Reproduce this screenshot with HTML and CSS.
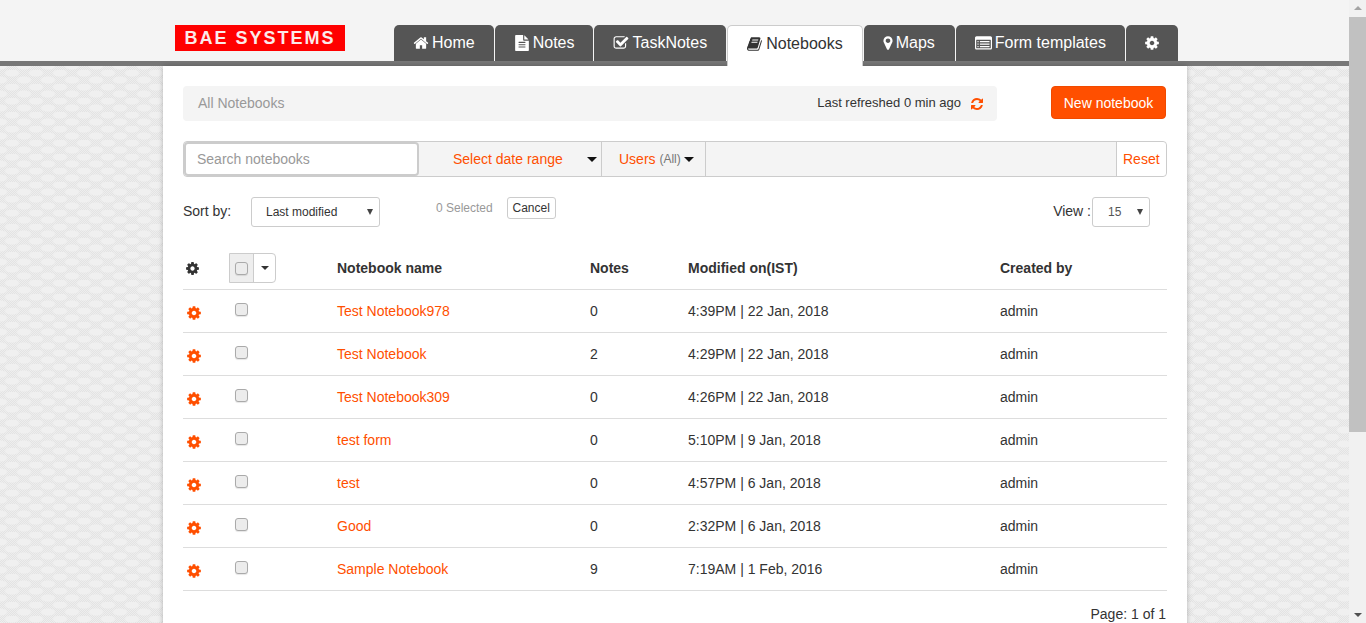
FILE: index.html
```html
<!DOCTYPE html>
<html lang="en">

<head>
    <meta charset="UTF-8">
    <meta name="viewport" content="width=device-width, initial-scale=1.0">
    <title>Notebooks</title>

    <link rel="stylesheet" href="styles.css">

</head>

<body>
    <!-- Icon set, reused with <use> -->
    <svg class="icon-defs" xmlns="http://www.w3.org/2000/svg">
        <symbol id="i-home" viewBox="0 0 1792 1792"><path d="M1472 992v480q0 26-19 45t-45 19h-384v-384h-256v384h-384q-26 0-45-19t-19-45v-480q0-1 .5-3t.5-3l575-474 575 474q1 2 1 6zm223-69l-62 74q-8 9-21 11h-3q-13 0-21-7l-692-577-692 577q-12 8-24 7-13-2-21-11l-62-74q-8-10-7-23.500t11-21.500l719-599q32-26 76-26t76 26l244 204v-195q0-14 9-23t23-9h192q14 0 23 9t9 23v408l219 182q10 8 11 21.500t-7 23.500z"/></symbol>
        <symbol id="i-file" viewBox="0 0 1792 1792"><path d="M1596 476q14 14 28 36h-472v-472q22 14 36 28zm-476 164h544v1056q0 40-28 68t-68 28h-1344q-40 0-68-28t-28-68v-1600q0-40 28-68t68-28h800v544q0 40 28 68t68 28zm160 736v-64q0-14-9-23t-23-9h-704q-14 0-23 9t-9 23v64q0 14 9 23t23 9h704q14 0 23-9t9-23zm0-256v-64q0-14-9-23t-23-9h-704q-14 0-23 9t-9 23v64q0 14 9 23t23 9h704q14 0 23-9t9-23zm0-256v-64q0-14-9-23t-23-9h-704q-14 0-23 9t-9 23v64q0 14 9 23t23 9h704q14 0 23-9t9-23z"/></symbol>
        <symbol id="i-check" viewBox="0 0 1792 1792"><path d="M1472 930v318q0 119-84.500 203.500t-203.500 84.500h-832q-119 0-203.500-84.500t-84.500-203.500v-832q0-119 84.500-203.500t203.500-84.500h832q63 0 117 25 15 7 18 23 3 17-9 29l-49 49q-10 10-23 10-3 0-9-2-23-6-45-6h-832q-66 0-113 47t-47 113v832q0 66 47 113t113 47h832q66 0 113-47t47-113v-254q0-13 9-22l64-64q10-10 23-10 6 0 12 3 20 8 20 29zm231-489l-814 814q-24 24-57 24t-57-24l-430-430q-24-24-24-57t24-57l110-110q24-24 57-24t57 24l263 263 647-647q24-24 57-24t57 24l110 110q24 24 24 57t-24 57z"/></symbol>
        <symbol id="i-book" viewBox="0 0 1792 1792"><path d="M1639 478q40 57 18 129l-275 906q-19 64-76.500 107.500t-122.500 43.500h-923q-77 0-148.500-53.500t-99.500-131.500q-24-67-2-127 0-4 3-27t4-37q1-8-3-21.500t-3-19.500q2-11 8-21t16.500-23.500 16.500-23.500q23-38 45-91.500t30-91.500q3-10 .5-30t-.5-28q3-11 17-28t17-23q21-36 42-92t25-90q1-9-2.500-32t.5-28q4-13 22-30.500t22-22.500q19-26 42.500-84.500t27.500-96.500q1-8-3-25.500t-2-26.500q2-8 9-18t18-23 17-21q8-12 16.500-30.500t15-35 16-36 19.500-32 26.500-23.500 36-11.500 47.500 5.500l-1 3q38-9 51-9h761q74 0 114 56t18 130l-274 906q-36 119-71.500 153.500t-128.500 34.500h-869q-27 0-38 15-11 16-1 43 24 70 144 70h923q29 0 56-15.500t35-41.500l300-987q7-22 5-57 38 15 59 43zm-1064 2q-4 13 2 22.500t20 9.500h608q13 0 25.500-9.500t16.500-22.500l21-64q4-13-2-22.500t-20-9.500h-608q-13 0-25.500 9.500t-16.500 22.500zm-83 256q-4 13 2 22.500t20 9.500h608q13 0 25.500-9.500t16.500-22.500l21-64q4-13-2-22.500t-20-9.500h-608q-13 0-25.500 9.500t-16.500 22.500z"/></symbol>
        <symbol id="i-marker" viewBox="0 0 1792 1792"><path d="M1152 640q0-106-75-181t-181-75-181 75-75 181 75 181 181 75 181-75 75-181zm256 0q0 109-33 179l-364 774q-16 33-47.500 52t-67.500 19-67.500-19-46.500-52l-365-774q-33-70-33-179 0-212 150-362t362-150 362 150 150 362z"/></symbol>
        <symbol id="i-list" viewBox="0 0 1792 1792"><path d="M384 1184v64q0 13-9.500 22.500t-22.500 9.500h-64q-13 0-22.500-9.500t-9.500-22.500v-64q0-13 9.500-22.500t22.500-9.500h64q13 0 22.500 9.500t9.500 22.500zm0-256v64q0 13-9.500 22.500t-22.500 9.500h-64q-13 0-22.500-9.500t-9.500-22.500v-64q0-13 9.500-22.500t22.500-9.500h64q13 0 22.500 9.500t9.500 22.500zm0-256v64q0 13-9.500 22.500t-22.500 9.500h-64q-13 0-22.500-9.500t-9.500-22.500v-64q0-13 9.500-22.500t22.500-9.500h64q13 0 22.500 9.500t9.500 22.500zm1152 512v64q0 13-9.500 22.500t-22.500 9.500h-960q-13 0-22.500-9.500t-9.500-22.500v-64q0-13 9.500-22.500t22.500-9.500h960q13 0 22.500 9.500t9.500 22.500zm0-256v64q0 13-9.500 22.500t-22.500 9.500h-960q-13 0-22.500-9.500t-9.500-22.500v-64q0-13 9.500-22.500t22.500-9.500h960q13 0 22.500 9.500t9.500 22.500zm0-256v64q0 13-9.500 22.500t-22.500 9.500h-960q-13 0-22.500-9.500t-9.500-22.500v-64q0-13 9.500-22.500t22.500-9.500h960q13 0 22.500 9.500t9.500 22.500zm128 704v-832q0-13-9.500-22.500t-22.500-9.500h-1472q-13 0-22.500 9.500t-9.500 22.500v832q0 13 9.500 22.500t22.500 9.500h1472q13 0 22.500-9.500t9.500-22.500zm128-1088v1088q0 66-47 113t-113 47h-1472q-66 0-113-47t-47-113v-1088q0-66 47-113t113-47h1472q66 0 113 47t47 113z"/></symbol>
        <symbol id="i-cog" viewBox="0 0 1792 1792"><path d="M1152 896q0-106-75-181t-181-75-181 75-75 181 75 181 181 75 181-75 75-181zm512-109v222q0 12-8 23t-20 13l-185 28q-19 54-39 91 35 50 107 138 10 12 10 25t-9 23q-27 37-99 108t-94 71q-12 0-26-9l-138-108q-44 23-91 38-16 136-29 186-7 28-36 28h-222q-14 0-24.500-8.500t-11.500-21.500l-28-184q-49-16-90-37l-141 107q-10 9-25 9-14 0-25-11-126-114-165-168-7-10-7-23 0-12 8-23 15-21 51-66.500t54-70.500q-27-50-41-99l-183-27q-13-2-21-12.500t-8-23.500v-222q0-12 8-23t19-13l186-28q14-46 39-92-40-57-107-138-10-12-10-24 0-10 9-23 26-36 98.500-107.500t94.500-71.500q13 0 26 10l138 107q44-23 91-38 16-136 29-186 7-28 36-28h222q14 0 24.500 8.500t11.500 21.500l28 184q49 16 90 37l142-107q9-9 24-9 13 0 25 10 129 119 165 170 7 8 7 22 0 12-8 23-15 21-51 66.500t-54 70.500q26 50 41 98l183 28q13 2 21 12.500t8 23.500z"/></symbol>
        <symbol id="i-refresh" viewBox="0 0 1792 1792"><path d="M1639 1056q0 5-1 7-64 268-268 434.500t-478 166.500q-146 0-282.500-55t-243.500-157l-129 129q-19 19-45 19t-45-19-19-45v-448q0-26 19-45t45-19h448q26 0 45 19t19 45-19 45l-137 137q71 66 161 102t187 36q134 0 250-65t186-179q11-17 53-117 8-23 30-23h192q13 0 22.500 9.500t9.500 22.500zm25-800v448q0 26-19 45t-45 19h-448q-26 0-45-19t-19-45 19-45l138-138q-148-137-349-137-134 0-250 65t-186 179q-11 17-53 117-8 23-30 23h-199q-13 0-22.500-9.500t-9.500-22.500v-7q65-268 270-434.500t480-166.500q146 0 284 55.500t245 156.500l130-129q19-19 45-19t45 19 19 45z"/></symbol>
    </svg>

    <div class="page">
        <div class="main">
            <!-- Top header with logo and tabs -->
            <header class="header">
                <div class="logo">BAE SYSTEMS</div>
                <nav class="tabs">
                    <a class="tab"><svg class="icon"><use href="#i-home"/></svg>Home</a>
                    <a class="tab"><svg class="icon"><use href="#i-file"/></svg>Notes</a>
                    <a class="tab"><svg class="icon"><use href="#i-check"/></svg>TaskNotes</a>
                    <a class="tab active"><svg class="icon"><use href="#i-book"/></svg>Notebooks</a>
                    <a class="tab tab-maps"><svg class="icon icon-narrow"><use href="#i-marker"/></svg>Maps</a>
                    <a class="tab"><svg class="icon icon-wide"><use href="#i-list"/></svg>Form templates</a>
                    <a class="tab tab-gear"><svg class="icon"><use href="#i-cog"/></svg></a>
                </nav>
            </header>

            <div class="panel">
                <div class="title-row">
                    <div class="title-bar">
                        <span class="title">All Notebooks</span>
                        <span class="refreshed">Last refreshed 0 min ago</span>
                        <svg class="icon-refresh"><use href="#i-refresh"/></svg>
                    </div>
                    <button class="btn-new">New notebook</button>
                </div>

                <!-- Search and filters -->
                <div class="filters">
                    <input class="search" type="text" placeholder="Search notebooks">
                    <div class="filter filter-date">Select date range<span class="caret"></span></div>
                    <div class="filter filter-users">Users&nbsp;<small>(All)</small><span class="caret"></span></div>
                    <div class="filter-space"></div>
                    <div class="reset">Reset</div>
                </div>

                <div class="sort-row">
                    <span class="sort-label">Sort by:</span>
                    <div class="select select-sort">Last modified</div>
                    <span class="selected-count">0 Selected</span>
                    <button class="btn-cancel">Cancel</button>
                    <span class="view-label">View :</span>
                    <div class="select select-view">15</div>
                </div>

                <table class="notebooks">
                    <thead>
                        <tr>
                            <th class="col-gear"><svg class="cog cog-head"><use href="#i-cog"/></svg></th>
                            <th class="col-check">
                                <div class="check-menu">
                                    <span class="check-box"><input type="checkbox"></span>
                                    <span class="check-drop"><span class="caret caret-small"></span></span>
                                </div>
                            </th>
                            <th class="col-name">Notebook name</th>
                            <th class="col-notes">Notes</th>
                            <th class="col-date">Modified on(IST)</th>
                            <th>Created by</th>
                        </tr>
                    </thead>
                    <tbody>
                        <tr>
                            <td><svg class="cog"><use href="#i-cog"/></svg></td>
                            <td class="cell-check"><input type="checkbox"></td>
                            <td><a class="link">Test Notebook978</a></td>
                            <td>0</td>
                            <td>4:39PM | 22 Jan, 2018</td>
                            <td>admin</td>
                        </tr>
                        <tr>
                            <td><svg class="cog"><use href="#i-cog"/></svg></td>
                            <td class="cell-check"><input type="checkbox"></td>
                            <td><a class="link">Test Notebook</a></td>
                            <td>2</td>
                            <td>4:29PM | 22 Jan, 2018</td>
                            <td>admin</td>
                        </tr>
                        <tr>
                            <td><svg class="cog"><use href="#i-cog"/></svg></td>
                            <td class="cell-check"><input type="checkbox"></td>
                            <td><a class="link">Test Notebook309</a></td>
                            <td>0</td>
                            <td>4:26PM | 22 Jan, 2018</td>
                            <td>admin</td>
                        </tr>
                        <tr>
                            <td><svg class="cog"><use href="#i-cog"/></svg></td>
                            <td class="cell-check"><input type="checkbox"></td>
                            <td><a class="link">test form</a></td>
                            <td>0</td>
                            <td>5:10PM | 9 Jan, 2018</td>
                            <td>admin</td>
                        </tr>
                        <tr>
                            <td><svg class="cog"><use href="#i-cog"/></svg></td>
                            <td class="cell-check"><input type="checkbox"></td>
                            <td><a class="link">test</a></td>
                            <td>0</td>
                            <td>4:57PM | 6 Jan, 2018</td>
                            <td>admin</td>
                        </tr>
                        <tr>
                            <td><svg class="cog"><use href="#i-cog"/></svg></td>
                            <td class="cell-check"><input type="checkbox"></td>
                            <td><a class="link">Good</a></td>
                            <td>0</td>
                            <td>2:32PM | 6 Jan, 2018</td>
                            <td>admin</td>
                        </tr>
                        <tr>
                            <td><svg class="cog"><use href="#i-cog"/></svg></td>
                            <td class="cell-check"><input type="checkbox"></td>
                            <td><a class="link">Sample Notebook</a></td>
                            <td>9</td>
                            <td>7:19AM | 1 Feb, 2016</td>
                            <td>admin</td>
                        </tr>
                    </tbody>
                </table>

                <div class="pager">Page: 1 of 1</div>
            </div>
        </div>

        <!-- Window scrollbar -->
        <div class="scrollbar">
            <span class="scroll-arrow scroll-up"></span>
            <div class="scroll-thumb"></div>
            <span class="scroll-arrow scroll-down"></span>
        </div>
    </div>
</body>

</html>
```

FILE: styles.css
```css
* {
    box-sizing: border-box;
}

html,
body {
    height: 100%;
    margin: 0;
    overflow: hidden;
}

body {
    font-family: "Liberation Sans", Arial, sans-serif;
    font-size: 14px;
    color: #333;
}

.icon-defs {
    display: none;
}

.page {
    display: flex;
    height: 100vh;
}

.main {
    flex: 1;
    min-width: 0;
    overflow: hidden;
    background-color: #ebebeb;
    background-image:
        radial-gradient(ellipse 8px 4px at 12px 3px, #f0f0f0 75%, transparent 100%),
        radial-gradient(ellipse 8px 4px at 0 10px, #f0f0f0 75%, transparent 100%),
        radial-gradient(ellipse 8px 4px at 24px 10px, #f0f0f0 75%, transparent 100%),
        repeating-conic-gradient(#e3e3e3 0 25%, #eeeeee 0 50%);
    background-size: 24px 14px, 24px 14px, 24px 14px, 2px 2px;
}

/* Header */
.header {
    display: flex;
    align-items: flex-start;
    height: 66px;
    padding: 25px 0 0 175px;
    background-color: #f4f4f4;
    border-bottom: 5px solid #777;
}

.logo {
    width: 170px;
    height: 26px;
    background-color: #f00;
    color: #fbeaea;
    font-size: 18px;
    font-weight: bold;
    line-height: 26px;
    letter-spacing: 2px;
    text-align: center;
}

.tabs {
    display: flex;
    align-items: flex-start;
    gap: 1px;
    margin-left: 49px;
}

.tab {
    display: flex;
    align-items: center;
    gap: 3px;
    height: 36px;
    padding: 0 19px;
    background-color: #555;
    border-radius: 5px 5px 0 0;
    color: #fff;
    font-size: 16px;
}

.tab.active {
    height: 41px;
    padding-bottom: 5px;
    background-color: #fff;
    border: 1px solid #ccc;
    border-bottom: none;
    color: #333;
}

.tab-maps {
    padding-right: 20px;
}

.tab-gear {
    padding: 0 18px;
}

.icon {
    width: 16px;
    height: 16px;
    fill: currentColor;
}

.icon-narrow {
    margin: 0 -3px;
}

.icon-wide {
    width: 17px;
    height: 17px;
}

/* Main panel */
.panel {
    width: 1024px;
    margin-left: 163px;
    padding: 20px;
    height: 700px;
    background-color: #fff;
    box-shadow: 0px 0px 5px rgba(0, 0, 0, 0.25);
}

.title-row {
    display: flex;
    align-items: flex-start;
    justify-content: space-between;
    padding-right: 1px;
}

.title-bar {
    display: flex;
    align-items: center;
    width: 814px;
    height: 35px;
    padding: 0 13px 0 15px;
    background-color: #f4f4f4;
    border-radius: 4px;
}

.title {
    flex: 1;
    margin-top: -1px;
    color: #999;
}

.refreshed {
    margin: -3px 9px 0 0;
    font-size: 13px;
}

.icon-refresh {
    width: 14px;
    height: 14px;
    fill: #ff4f00;
}

.btn-new {
    width: 115px;
    height: 33px;
    padding: 0;
    background-color: #ff4f00;
    border: 1px solid #f04a00;
    border-radius: 4px;
    color: #fff;
    font-family: inherit;
    font-size: 14px;
}

/* Filters */
.filters {
    display: flex;
    height: 36px;
    margin-top: 20px;
    background-color: #f4f4f4;
    border: 1px solid #ccc;
    border-radius: 4px;
}

.search {
    width: 235px;
    margin: 0;
    padding: 0 11px;
    background-color: #fff;
    border: 2px solid #ccc;
    border-radius: 4px;
    font-family: inherit;
    font-size: 14px;
    outline: none;
}

.search::placeholder {
    color: #999;
}

.filter {
    display: flex;
    align-items: center;
    color: #ff4f00;
    border-right: 1px solid #ccc;
}

.filter small {
    color: #777;
    font-size: 12px;
}

.filter-date {
    width: 183px;
    padding-left: 34px;
}

.filter-date .caret {
    margin-left: auto;
    margin-right: 4px;
}

.filter-users {
    width: 104px;
    padding-left: 17px;
}

.filter-users .caret {
    margin-left: 3px;
}

.caret {
    display: inline-block;
    width: 0;
    height: 0;
    border-top: 5px solid #111;
    border-left: 5px solid transparent;
    border-right: 5px solid transparent;
}

.caret-small {
    border-top-width: 4px;
    border-left-width: 4px;
    border-right-width: 4px;
    border-top-color: #333;
}

.filter-space {
    flex: 1;
}

.reset {
    display: flex;
    align-items: center;
    width: 50px;
    padding-left: 6px;
    background-color: #fff;
    border-left: 1px solid #ccc;
    border-radius: 0 4px 4px 0;
    color: #ff4f00;
}

/* Sort row */
.sort-row {
    display: flex;
    align-items: flex-start;
    height: 30px;
    margin-top: 20px;
}

.sort-label {
    width: 68px;
    line-height: 28px;
}

.select {
    position: relative;
    height: 30px;
    background-color: #fff;
    border: 1px solid #ccc;
    border-radius: 3px;
    font-size: 12px;
    line-height: 28px;
}

.select::after {
    content: "";
    position: absolute;
    top: 11px;
    right: 6px;
    border-top: 6px solid #444;
    border-left: 3px solid transparent;
    border-right: 3px solid transparent;
}

.select-sort {
    width: 129px;
    padding-left: 14px;
}

.selected-count {
    margin-left: 56px;
    color: #999;
    font-size: 12px;
    line-height: 22px;
}

.btn-cancel {
    height: 22px;
    width: 49px;
    margin-left: 14px;
    padding: 0;
    background-color: #fff;
    border: 1px solid #ccc;
    border-radius: 3px;
    color: #333;
    font-family: inherit;
    font-size: 12px;
}

.view-label {
    margin-left: auto;
    margin-right: 1px;
    line-height: 28px;
}

.select-view {
    width: 58px;
    margin-right: 17px;
    padding-left: 15px;
    color: #555;
}

/* Table */
.notebooks {
    width: 984px;
    margin-top: 21px;
    border-collapse: collapse;
    table-layout: fixed;
}

.notebooks th,
.notebooks td {
    padding: 0;
    border-bottom: 1px solid #ddd;
    text-align: left;
    vertical-align: middle;
}

.notebooks thead tr {
    height: 41px;
}

.notebooks tbody tr {
    height: 43px;
}

.col-gear {
    width: 46px;
}

.col-check {
    width: 108px;
}

.col-name {
    width: 253px;
}

.col-notes {
    width: 98px;
}

.col-date {
    width: 312px;
}

.cog {
    display: block;
    width: 16px;
    height: 16px;
    margin: 5px 0 0 3px;
    fill: #ff4f00;
}

.cog-head {
    width: 15px;
    height: 15px;
    margin: 0 0 0 2px;
    fill: #333;
}

.link {
    color: #ff4f00;
}

input[type="checkbox"] {
    appearance: none;
    display: block;
    width: 13px;
    height: 13px;
    margin: 0;
    background-color: #ececec;
    border: 1px solid #aaa;
    border-radius: 3px;
    box-shadow: 0px 1px 1px rgba(0, 0, 0, 0.1);
}

.cell-check input[type="checkbox"] {
    margin: -3px 0 0 6px;
}

.check-menu {
    display: flex;
    width: 47px;
    height: 30px;
    border: 1px solid #ccc;
    border-radius: 0 4px 4px 0;
}

.check-box {
    display: flex;
    align-items: center;
    justify-content: center;
    width: 24px;
    background-color: #eee;
    border-right: 1px solid #ccc;
}

.check-drop {
    display: flex;
    flex: 1;
    align-items: center;
    justify-content: center;
}

.pager {
    margin-top: 15px;
    padding-right: 1px;
    text-align: right;
}

/* Scrollbar */
.scrollbar {
    display: flex;
    flex-direction: column;
    align-items: center;
    width: 17px;
    background-color: #f1f1f1;
}

.scroll-arrow {
    flex: none;
    width: 0;
    height: 0;
    border-left: 4px solid transparent;
    border-right: 4px solid transparent;
}

.scroll-up {
    margin: 6px 0 7px;
    border-bottom: 4px solid #a3a3a3;
}

.scroll-down {
    margin: auto 0 6px;
    border-top: 4px solid #505050;
}

.scroll-thumb {
    flex: none;
    width: 100%;
    height: 415px;
    background-color: #c1c1c1;
}
```
